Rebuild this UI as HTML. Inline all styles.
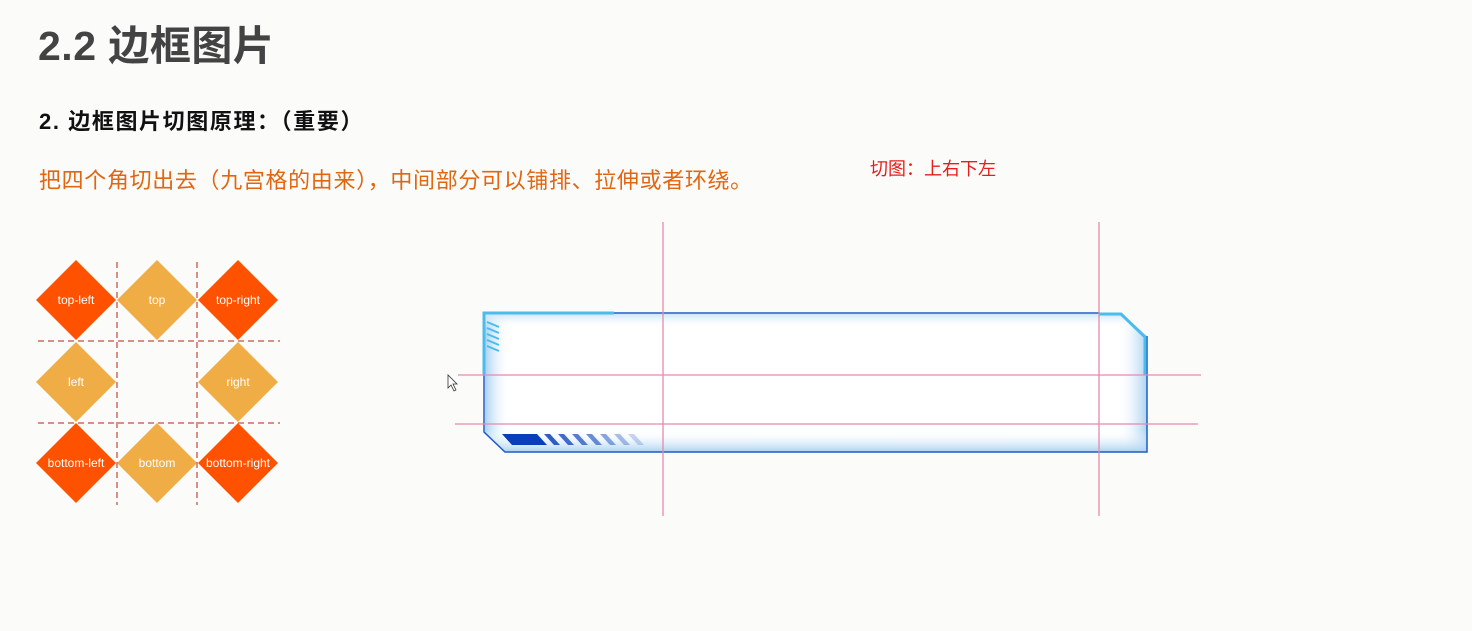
<!DOCTYPE html>
<html><head><meta charset="utf-8"><style>
body{margin:0;width:1472px;height:631px;background:#fbfcfa;overflow:hidden;position:relative;font-family:"Liberation Sans","Noto Sans CJK SC",sans-serif}
.t{position:absolute;white-space:nowrap}
</style></head><body>
<div class="t" style="left:38px;top:12px;font-size:41px;font-weight:bold;color:#434343;letter-spacing:0.5px">2.2 边框图片</div>
<div class="t" style="left:39px;top:104px;font-size:22px;font-weight:bold;color:#111;letter-spacing:1.6px">2. 边框图片切图原理：（重要）</div>
<div class="t" style="left:39px;top:163px;font-size:22px;color:#e2650f;letter-spacing:0.65px">把四个角切出去（九宫格的由来），中间部分可以铺排、拉伸或者环绕。</div>
<div class="t" style="left:870px;top:155px;font-size:18px;color:#e81c1c">切图：上右下左</div>
<svg width="1472" height="631" style="position:absolute;left:0;top:0" font-family="Liberation Sans, sans-serif">
<g font-size="12" fill="#fff" text-anchor="middle">
<polygon points="76,260 116,300 76,340 36,300" fill="#ff5200"/><text x="76" y="304">top-left</text>
<polygon points="157,260 197,300 157,340 117,300" fill="#f0ac45"/><text x="157" y="304">top</text>
<polygon points="238,260 278,300 238,340 198,300" fill="#ff5200"/><text x="238" y="304">top-right</text>
<polygon points="76,342 116,382 76,422 36,382" fill="#f0ac45"/><text x="76" y="386">left</text>
<polygon points="238,342 278,382 238,422 198,382" fill="#f0ac45"/><text x="238" y="386">right</text>
<polygon points="76,423 116,463 76,503 36,463" fill="#ff5200"/><text x="76" y="467">bottom-left</text>
<polygon points="157,423 197,463 157,503 117,463" fill="#f0ac45"/><text x="157" y="467">bottom</text>
<polygon points="238,423 278,463 238,503 198,463" fill="#ff5200"/><text x="238" y="467">bottom-right</text>
</g>
<g stroke="#d06a5c" stroke-width="1.5" stroke-dasharray="6,4">
<line x1="117" y1="262" x2="117" y2="505"/><line x1="197" y1="262" x2="197" y2="505"/>
<line x1="38" y1="341" x2="280" y2="341"/><line x1="38" y1="423" x2="280" y2="423"/>
</g>
<defs>
<linearGradient id="gl" x1="0" x2="1"><stop offset="0" stop-color="#a9d2f2"/><stop offset="1" stop-color="#fff" stop-opacity="0"/></linearGradient>
<linearGradient id="gr" x1="1" x2="0"><stop offset="0" stop-color="#a9d2f2"/><stop offset="1" stop-color="#fff" stop-opacity="0"/></linearGradient>
<linearGradient id="gb" y1="1" y2="0" x1="0" x2="0"><stop offset="0" stop-color="#a9d2f2"/><stop offset="1" stop-color="#fff" stop-opacity="0"/></linearGradient>
<linearGradient id="gt" y1="0" y2="1" x1="0" x2="0"><stop offset="0" stop-color="#cfe6f8"/><stop offset="1" stop-color="#fff" stop-opacity="0"/></linearGradient>
<clipPath id="fc"><polygon points="484,313 1122,313 1147,336 1147,452 505,452 484,432"/></clipPath>
</defs>
<polygon points="484,313 1122,313 1147,336 1147,452 505,452 484,432" fill="#fff"/>
<g clip-path="url(#fc)">
<rect x="485" y="314" width="25" height="136" fill="url(#gl)"/>
<rect x="1118" y="314" width="29" height="138" fill="url(#gr)"/>
<rect x="485" y="430" width="662" height="22" fill="url(#gb)"/>
<rect x="485" y="314" width="660" height="14" fill="url(#gt)"/>
</g>
<polyline points="484,313 484,432 505,452 1147,452 1147,336" fill="none" stroke="#1f5cc4" stroke-width="1.5"/>
<line x1="612" y1="313" x2="1100" y2="313" stroke="#1f5cc4" stroke-width="1.5"/>
<polyline points="484,375 484,313 614,313" fill="none" stroke="#4cbcec" stroke-width="3"/>
<polyline points="1099,314 1121,314 1145,337 1145,375" fill="none" stroke="#4cbcec" stroke-width="3"/>
<g stroke="#4cbcec" stroke-width="2"><line x1="487" y1="322" x2="499" y2="327"/><line x1="487" y1="328" x2="499" y2="333"/><line x1="487" y1="334" x2="499" y2="339"/><line x1="487" y1="340" x2="499" y2="345"/><line x1="487" y1="346" x2="499" y2="351"/></g>
<polygon points="502,434 537,434 547,445 512,445" fill="#0a3fb8"/>
<g fill="#2c5dc4"><polygon points="544,434 550,434 560,445 554,445"/><polygon points="558,434 564,434 574,445 568,445" opacity=".9"/><polygon points="572,434 578,434 588,445 582,445" opacity=".8"/><polygon points="586,434 592,434 602,445 596,445" opacity=".7"/><polygon points="600,434 606,434 616,445 610,445" opacity=".55"/><polygon points="614,434 620,434 630,445 624,445" opacity=".4"/><polygon points="628,434 634,434 644,445 638,445" opacity=".25"/></g>
<g stroke="#e48aac" stroke-width="1.3">
<line x1="663" y1="222" x2="663" y2="516"/><line x1="1099" y1="222" x2="1099" y2="516"/>
<line x1="458" y1="375" x2="1201" y2="375"/><line x1="455" y1="424" x2="1198" y2="424"/>
</g>
<path d="M448,375 L448,388 L451,385 L454,391 L456,390 L453,384 L457,384 Z" fill="#fff" stroke="#333" stroke-width="0.8"/>
</svg>
</body></html>
